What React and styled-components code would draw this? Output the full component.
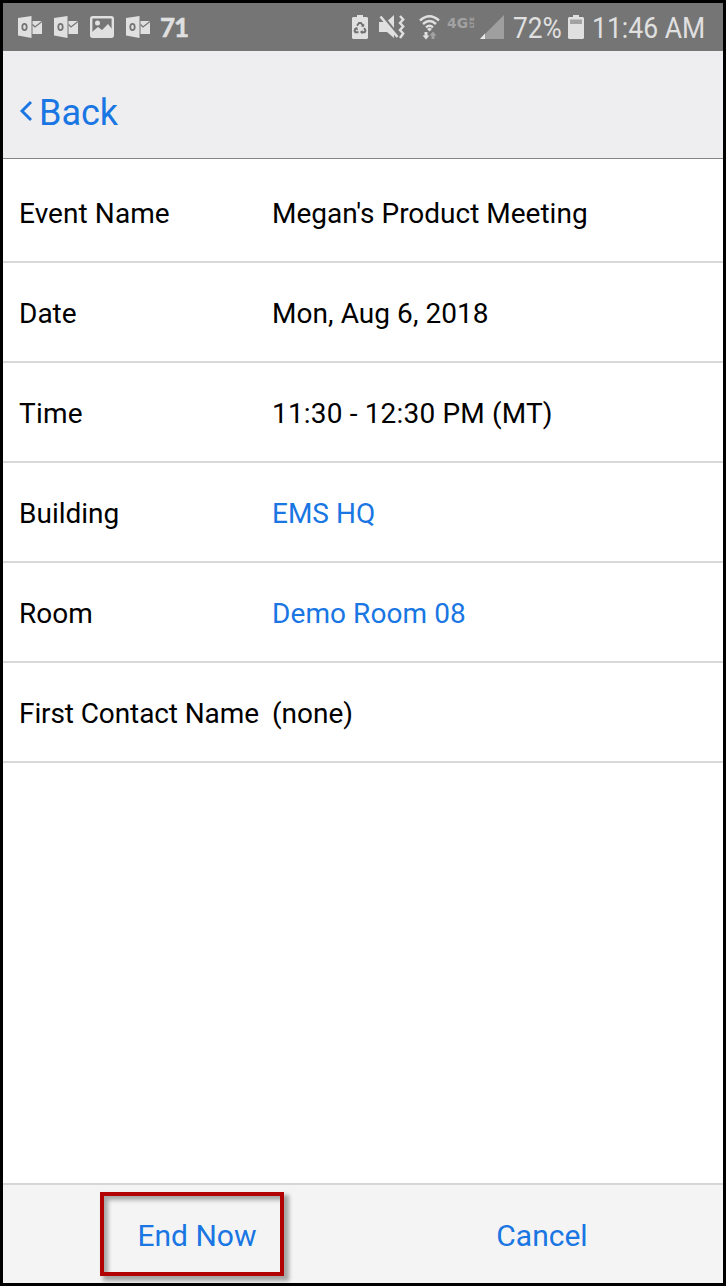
import React from "react";
import styled, { createGlobalStyle } from "styled-components";

const Global = createGlobalStyle`
  * { box-sizing: border-box; }
  body { margin: 0; background: #000; font-family: Roboto, "Liberation Sans", sans-serif; }
`;

const Screen = styled.div`
  width: 726px;
  height: 1286px;
  border: 3px solid #000;
  background: #fff;
  display: flex;
  flex-direction: column;
  overflow: hidden;
`;

const StatusBar = styled.div`
  height: 48px;
  flex: none;
  display: flex;
  justify-content: space-between;
  background: #757575;
  color: #e0e0e0;
  padding: 0 18px 0 15px;
`;

const StatusGroup = styled.div`
  display: flex;
  align-items: center;
`;

const StatusIcon = styled.svg`
  display: block;
  flex: none;
  margin-left: ${(p) => p.$gap || 0}px;
`;

const Count = styled.span`
  font: 700 26px/48px Lato, sans-serif;
  letter-spacing: -1px;
  -webkit-text-stroke: 0.5px #e0e0e0;
  margin-left: 10px;
`;

const Slot = styled.span`
  width: ${(p) => p.$width}px;
  margin-left: ${(p) => p.$gap}px;
  white-space: nowrap;
`;

const Narrow = styled.span`
  display: inline-block;
  font-size: 30px;
  line-height: 48px;
  padding-top: 1px;
  transform: scaleX(${(p) => p.$scale});
  transform-origin: left;
`;

const NetworkLabel = styled.text`
  font-family: "DejaVu Sans", sans-serif;
  font-weight: 700;
  font-size: ${(p) => p.$size}px;
  fill: #a2a2a2;
`;

const Header = styled.header`
  height: 108px;
  flex: none;
  background: #eeeef0;
  border-bottom: 1px solid #858585;
  padding: 16px 0 0 16px;
  display: flex;
  align-items: center;
`;

const BackButton = styled.a`
  display: flex;
  align-items: center;
  gap: 6px;
  color: #1976e3;
  font-size: 36px;
  line-height: 44px;
`;

const Chevron = styled.svg`
  display: block;
  margin-bottom: 3px;
`;

const Details = styled.main`
  flex: 1;
  padding-top: 4px;
`;

const Row = styled.div`
  height: 100px;
  border-bottom: 2px solid #d8d8d8;
  display: grid;
  grid-template-columns: 253px 1fr;
  align-items: center;
  padding: 4px 16px 0;
  font-size: 28px;
  line-height: 36px;
  color: #000;
`;

const Label = styled.span`
  letter-spacing: ${(p) => p.$tracking || 0}px;
`;

const Value = styled(Label)`
  color: ${(p) => (p.$link ? "#1976e3" : "#000")};
`;

const Footer = styled.footer`
  height: 100px;
  flex: none;
  background: #f4f4f4;
  border-top: 2px solid #d6d6d6;
  display: grid;
  grid-template-columns: 345px 1fr;
  padding-top: 7px;
`;

const Action = styled.div`
  display: flex;
  align-items: center;
  justify-content: center;
  width: 184px;
  height: 84px;
  margin-left: 97px;
  padding: 2px 0 0 10px;
  font-size: 30px;
  color: #1976e3;
  border: 4px solid ${(p) => (p.$marked ? "#b20303" : "transparent")};
  box-shadow: ${(p) =>
    p.$marked ? "4px 4px 4px 1px rgba(0,0,0,.32), inset 4px 4px 4px rgba(0,0,0,.32)" : "none"};
`;

const Outlook = ({ gap }) => (
  <StatusIcon $gap={gap} width="24" height="24" viewBox="0 0 24 24">
    <path d="M0 3 13.5 1v22L0 20.500z" fill="#e0e0e0" />
    <path d="M14.500 6H24v13h-9.500z" fill="#e0e0e0" />
    <path d="m14.500 9.500 2.500 2.500 7-5.500" fill="none" stroke="#757575" strokeWidth="1.300" />
    <ellipse cx="6.500" cy="12" rx="2.200" ry="3.200" fill="none" stroke="#757575" strokeWidth="1.800" />
  </StatusIcon>
);

const Picture = () => (
  <StatusIcon $gap={12} width="24" height="24" viewBox="0 0 24 24">
    <rect x="1.200" y="2.200" width="21.600" height="19.600" rx="1.500" fill="none" stroke="#e0e0e0" strokeWidth="2.400" />
    <circle cx="7.500" cy="8" r="2.500" fill="#e0e0e0" />
    <path d="M2 17 8 12l4 3 6-6 4 5v7H2z" fill="#e0e0e0" />
  </StatusIcon>
);

const rows = [
  { label: "Event Name", value: "Megan's Product Meeting", labelTracking: 0.08 },
  { label: "Date", value: "Mon, Aug 6, 2018", tracking: 0.06 },
  { label: "Time", value: "11:30 - 12:30 PM (MT)", tracking: 0.17, labelTracking: 0.2 },
  { label: "Building", value: "EMS HQ", link: true },
  { label: "Room", value: "Demo Room 08", link: true, tracking: 0.08 },
  { label: "First Contact Name", value: "(none)", labelTracking: -0.1 },
];

export default function App() {
  return (
    <>
      <Global />
      <Screen>
        <StatusBar>
          <StatusGroup>
            <Outlook />
            <Outlook gap={12} />
            <Picture />
            <Outlook gap={12} />
            <Count>71</Count>
          </StatusGroup>
          <StatusGroup>
            <StatusIcon width="16" height="24" viewBox="0 0 16 24">
              <path d="M5 0h6v2h4l1 1v20l-1 1H1l-1-1V3l1-1h4z" fill="#e0e0e0" />
              <path
                d="M5 10.800 7 8h2l2 2.800M12.200 13l1.300 2.800-.8 1.400H9.500M6.500 17.200H3.300l-.8-1.400L4 13"
                fill="none"
                stroke="#707070"
                strokeWidth="1.900"
              />
              <path d="M9 11.800h3.200V8.600zM10.500 15v4.200l-2.600-2.100zM2 13.600l3.300-1.500.6 3.400z" fill="#707070" />
            </StatusIcon>
            <StatusIcon $gap={11} width="26" height="24" viewBox="0 0 26 24">
              <path d="M0 7h6l9 10.500V23L8 17H0z" fill="#e0e0e0" />
              <path d="M9 5.500 15 0v13z" fill="#e0e0e0" />
              <path d="m1.500 1.500 17 20.500" stroke="#e0e0e0" strokeWidth="2.600" />
              <path d="m21 1 3.200 3.500L21 8l3.200 3.500L21 15l3.200 3.500L21 23" fill="none" stroke="#e0e0e0" strokeWidth="2.400" />
            </StatusIcon>
            <StatusIcon $gap={14} width="22" height="26" viewBox="0 0 22 26">
              <path d="M1 6.500q9.500-8.500 19 0M4 10q6.500-6 13 0M7 13.300q3.500-3.200 7 0" fill="none" stroke="#e0e0e0" strokeWidth="2.400" />
              <path d="m8 15 2.500-1.500L13 15l-2.500 2.500z" fill="#e0e0e0" />
              <path d="M5.500 18h3v3.500h2L7 25.500l-3.500-4h2z" fill="#e0e0e0" />
              <path d="M12.500 25v-3.500h-2l3.500-4 3.500 4h-2V25z" fill="#a2a2a2" />
            </StatusIcon>
            <StatusIcon $gap={6} width="28" height="24" viewBox="0 0 28 24">
              <NetworkLabel $size={14.5} x="0" y="12.500" textLength="21" lengthAdjust="spacingAndGlyphs">4G</NetworkLabel>
              <NetworkLabel
                $size={6}
                transform="translate(26.500 13) rotate(-90)"
                textLength="11"
                lengthAdjust="spacingAndGlyphs"
              >
                LTE
              </NetworkLabel>
            </StatusIcon>
            <StatusIcon $gap={5} width="24" height="24" viewBox="0 0 24 24">
              <path d="M24 0v24H0z" fill="#9f9f9f" />
              <path d="M5 18.500V24H0z" fill="#e8e8e8" />
            </StatusIcon>
            <Slot $gap={9} $width={48}><Narrow $scale={0.875}>72%</Narrow></Slot>
            <StatusIcon $gap={7} width="16" height="24" viewBox="0 0 16 24">
              <path d="M5 0h6v2h4l1 1v20l-1 1H1l-1-1V3l1-1h4z" fill="#e0e0e0" />
              <path d="M2 4.500h12V9H2z" fill="#a2a2a2" />
            </StatusIcon>
            <Slot $gap={8} $width={113}><Narrow $scale={0.885}>11:46 AM</Narrow></Slot>
          </StatusGroup>
        </StatusBar>
        <Header>
          <BackButton>
            <Chevron width="14" height="22" viewBox="0 0 14 22">
              <path d="m12 2-9 9 9 9" fill="none" stroke="currentColor" strokeWidth="2.900" />
            </Chevron>
            Back
          </BackButton>
        </Header>
        <Details>
          {rows.map(({ label, value, link, tracking, labelTracking }) => (
            <Row key={label}>
              <Label $tracking={labelTracking}>{label}</Label>
              <Value $link={link} $tracking={tracking}>{value}</Value>
            </Row>
          ))}
        </Details>
        <Footer>
          <Action $marked>End Now</Action>
          <Action>Cancel</Action>
        </Footer>
      </Screen>
    </>
  );
}
